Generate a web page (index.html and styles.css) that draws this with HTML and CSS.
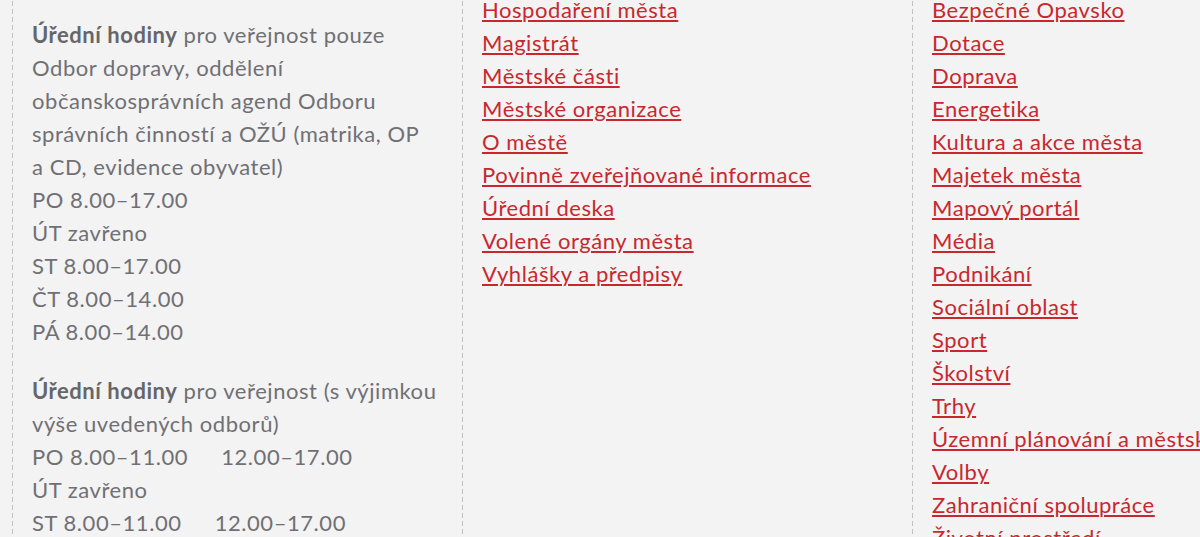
FILE: index.html
```html
<!DOCTYPE html>
<html lang="cs">
<head>
<meta charset="utf-8">
<title>Úřední hodiny</title>
<link rel="stylesheet" href="styles.css">
</head>
<body>
<div class="footer">
  <div class="col col-info">
    <p class="para"><strong>Úřední hodiny</strong> pro veřejnost pouze<br>Odbor dopravy, oddělení<br>občanskosprávních agend Odboru<br>správních činností a OŽÚ (matrika, OP<br>a CD, evidence obyvatel)<br>PO 8.00–17.00<br>ÚT zavřeno<br>ST 8.00–17.00<br>ČT 8.00–14.00<br>PÁ 8.00–14.00</p>
    <p class="para"><strong>Úřední hodiny</strong> pro veřejnost (s výjimkou<br>výše uvedených odborů)<br>PO 8.00–11.00 <span class="second">12.00–17.00</span><br>ÚT zavřeno<br>ST 8.00–11.00 <span class="second">12.00–17.00</span><br>ČT 8.00–14.00<br>PÁ 8.00–14.00</p>
  </div>
  <div class="col">
    <ul class="links">
      <li><a href="#">Hospodaření města</a></li>
      <li><a href="#">Magistrát</a></li>
      <li><a href="#">Městské části</a></li>
      <li><a href="#">Městské organizace</a></li>
      <li><a href="#">O městě</a></li>
      <li><a href="#">Povinně zveřejňované informace</a></li>
      <li><a href="#">Úřední deska</a></li>
      <li><a href="#">Volené orgány města</a></li>
      <li><a href="#">Vyhlášky a předpisy</a></li>
    </ul>
  </div>
  <div class="col">
    <ul class="links">
      <li><a href="#">Bezpečné Opavsko</a></li>
      <li><a href="#">Dotace</a></li>
      <li><a href="#">Doprava</a></li>
      <li><a href="#">Energetika</a></li>
      <li><a href="#">Kultura a akce města</a></li>
      <li><a href="#">Majetek města</a></li>
      <li><a href="#">Mapový portál</a></li>
      <li><a href="#">Média</a></li>
      <li><a href="#">Podnikání</a></li>
      <li><a href="#">Sociální oblast</a></li>
      <li><a href="#">Sport</a></li>
      <li><a href="#">Školství</a></li>
      <li><a href="#">Trhy</a></li>
      <li><a href="#">Územní plánování a městský architekt</a></li>
      <li><a href="#">Volby</a></li>
      <li><a href="#">Zahraniční spolupráce</a></li>
      <li><a href="#">Životní prostředí</a></li>
    </ul>
  </div>
</div>
</body>
</html>
```
FILE: styles.css
```css
html, body {
  margin: 0;
  padding: 0;
  background: #f3f3f3;
  overflow: hidden;
  height: 537px;
}
body {
  font-family: Lato, "Noto Sans", sans-serif;
  font-size: 22px;
  line-height: 33px;
  letter-spacing: 0.55px;
  color: #707074;
}
.footer {
  display: grid;
  grid-template-columns: 450px 450px 450px;
  margin-top: -7px;
  margin-left: 12px;
  width: 1350px;
}
.col {
  background-image: linear-gradient(to bottom, #c2c2c2 0, #c2c2c2 5px, transparent 5px, transparent 8px);
  background-size: 1px 8px;
  background-repeat: repeat-y;
  background-position: left top;
  padding-left: 20px;
  min-height: 600px;
  white-space: nowrap;
}
.col-info {
  padding-top: 25px;
}
.para {
  margin: 0 0 26px 0;
}
.para strong {
  font-weight: 700;
  color: #66666a;
}
.second {
  margin-left: 27px;
}
.links {
  list-style: none;
  margin: 0;
  padding: 0;
}
.links a {
  color: #c8282d;
  text-decoration: underline;
  text-decoration-thickness: 1.5px;
  text-underline-offset: 2px;
}
```
